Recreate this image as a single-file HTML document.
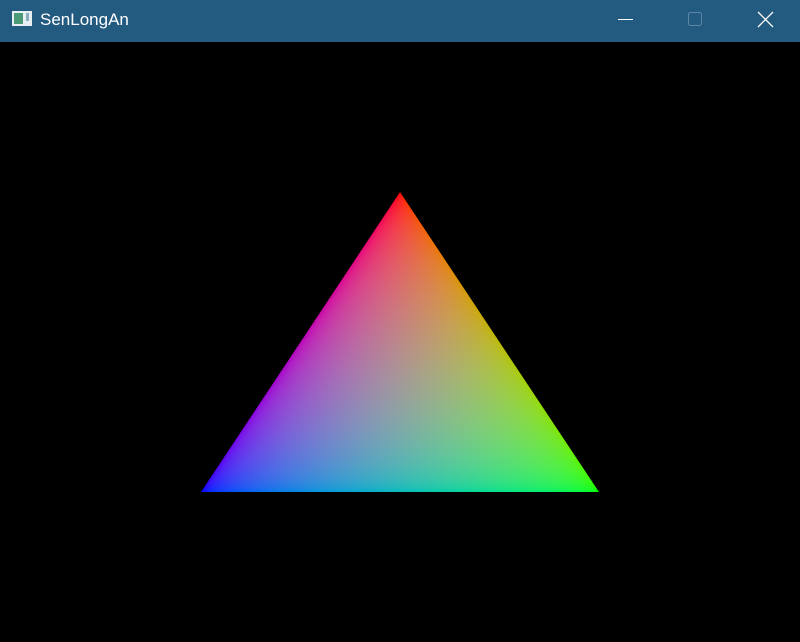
<!DOCTYPE html>
<html><head><style>
html,body{margin:0;padding:0;background:#000;width:800px;height:642px;overflow:hidden}
.tb{position:absolute;left:0;top:0;width:800px;height:42px;background:#235a80;font-family:"Liberation Sans",sans-serif;color:#fff}
.tb .t{position:absolute;left:40px;top:10px;font-size:17px}
</style></head><body>
<div class="tb">
<svg width="800" height="42" style="position:absolute;left:0;top:0">
<rect x="12" y="11" width="20" height="15" fill="#e8eef2"/>
<rect x="14" y="13" width="9" height="11" fill="#4a9a78"/>
<rect x="26" y="13" width="3" height="8" fill="#8ab0c0"/>
<line x1="618" y1="19.5" x2="633" y2="19.5" stroke="#fff" stroke-width="1"/>
<rect x="688.5" y="12.5" width="13" height="13" rx="2" fill="none" stroke="#5f86a3" stroke-width="1"/>
<path d="M758 12 L773 27 M773 12 L758 27" stroke="#fff" stroke-width="1.3"/>
</svg>
<div class="t">SenLongAn</div>
</div>
<svg width="800" height="642" style="position:absolute;left:0;top:0">
<defs>
<linearGradient id="r" color-interpolation="linearRGB" gradientUnits="userSpaceOnUse" x1="400" y1="192" x2="400" y2="492"><stop offset="0" stop-color="#f00"/><stop offset="1" stop-color="#000"/></linearGradient>
<linearGradient id="g" color-interpolation="linearRGB" gradientUnits="userSpaceOnUse" x1="599" y1="492" x2="322.6" y2="308.7"><stop offset="0" stop-color="#0f0"/><stop offset="1" stop-color="#000"/></linearGradient>
<linearGradient id="b" color-interpolation="linearRGB" gradientUnits="userSpaceOnUse" x1="201" y1="492" x2="477.4" y2="308.7"><stop offset="0" stop-color="#00f"/><stop offset="1" stop-color="#000"/></linearGradient>
</defs>
<polygon points="400,192 599,492 201,492" fill="url(#r)" style="mix-blend-mode:screen"/>
<polygon points="400,192 599,492 201,492" fill="url(#g)" style="mix-blend-mode:screen"/>
<polygon points="400,192 599,492 201,492" fill="url(#b)" style="mix-blend-mode:screen"/>
</svg>
</body></html>
